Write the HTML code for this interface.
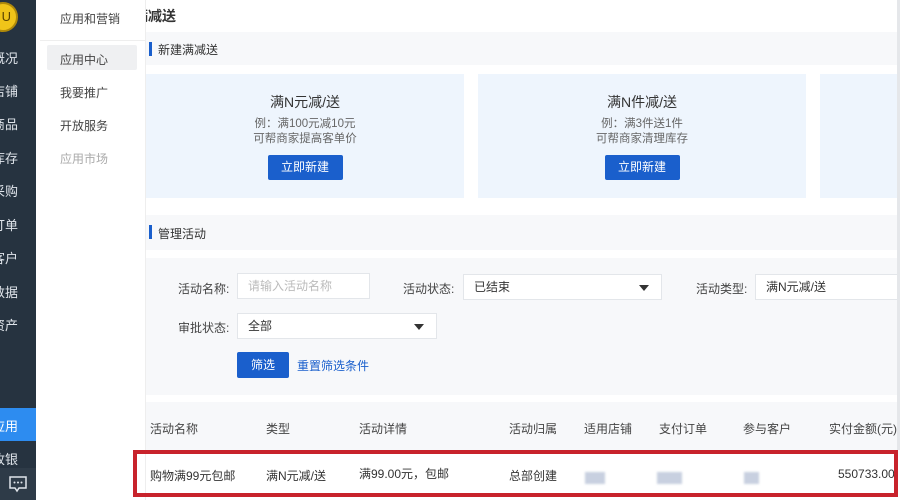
<!DOCTYPE html>
<html><head><meta charset="utf-8"><style>
*{margin:0;padding:0;box-sizing:border-box}
body{width:900px;height:500px;overflow:hidden;background:#fff;font-family:"Liberation Sans","Noto Sans CJK SC",sans-serif;font-size:12px;color:#333;position:relative}
.a{position:absolute}
#sb{left:0;top:0;width:36px;height:500px;background:#263340;overflow:hidden;z-index:3}
#sb .it{position:absolute;left:-12px;width:30px;color:#dfe4ea;font-size:13px;text-align:right;white-space:nowrap}
#sub{left:36px;top:0;width:110px;height:500px;background:#fff;border-right:1px solid #eee;z-index:2}
.sn{position:absolute;left:24px;font-size:12px;color:#444}
.gray{background:#f7f8fa}
.card{background:#eef5fd;text-align:center}
.card h3{font-weight:normal;font-size:14px;color:#333;margin-top:18px}
.card p{font-size:11.5px;color:#666;line-height:15px}
.btn{display:inline-block;background:#1a5fcc;color:#fff;font-size:12px;width:75px;height:25px;line-height:25px;border-radius:2px;text-align:center}
.inp{background:#fff;border:1px solid #e3e6ea;height:26px;line-height:24px;padding-left:10px;font-size:12px;white-space:nowrap}
.tri{position:absolute;right:12px;top:10px;width:0;height:0;border-left:5px solid transparent;border-right:5px solid transparent;border-top:6px solid #333}
.lbl{font-size:12px;color:#444;white-space:nowrap}
.bar{position:absolute;width:3px;height:14px;background:#1a5fcc}
.blur{background:#c8d0e0;filter:blur(1px)}
</style></head><body>
<div id="sb" class="a">
 <div class="a" style="left:-12px;top:2px;width:30px;height:30px;border-radius:50%;background:#f0c419;border:2px solid #b08a0a;color:#5a4300;font-size:13px;line-height:26px;text-align:right;padding-right:5px">U</div>
 <div class="it" style="top:48px">概况</div>
 <div class="it" style="top:81px">店铺</div>
 <div class="it" style="top:114px">商品</div>
 <div class="it" style="top:148px">库存</div>
 <div class="it" style="top:181px">采购</div>
 <div class="it" style="top:215px">订单</div>
 <div class="it" style="top:248px">客户</div>
 <div class="it" style="top:282px">数据</div>
 <div class="it" style="top:315px">资产</div>
 <div class="a" style="left:0;top:408px;width:36px;height:33px;background:#2d8cf0"></div>
 <div class="it" style="top:416px;color:#fff">应用</div>
 <div class="it" style="top:449px">收银</div>
 <div class="a" style="left:0;top:468px;width:36px;height:32px;background:#2e3b48"></div>
 <svg class="a" style="left:8px;top:474px" width="20" height="20" viewBox="0 0 20 20"><path d="M2 3h16v11H11l-2 3-2-3H2z" fill="none" stroke="#dfe4ea" stroke-width="1.5"/><circle cx="6.5" cy="8.5" r="1" fill="#dfe4ea"/><circle cx="10" cy="8.5" r="1" fill="#dfe4ea"/><circle cx="13.5" cy="8.5" r="1" fill="#dfe4ea"/></svg>
</div>
<div id="sub" class="a">
 <div class="sn" style="top:10px">应用和营销</div>
 <div class="a" style="left:4px;top:40px;width:106px;height:1px;background:#eee"></div>
 <div class="a" style="left:11px;top:45px;width:90px;height:25px;background:#eff0f2;border-radius:2px"></div>
 <div class="sn" style="top:51px">应用中心</div>
 <div class="sn" style="top:84px">我要推广</div>
 <div class="sn" style="top:117px">开放服务</div>
 <div class="sn" style="top:150px;color:#aaa">应用市场</div>
</div>
<div class="a" style="left:134px;top:6px;font-size:14px;font-weight:bold;color:#333;white-space:nowrap">满减送</div>
<div class="a gray" style="left:146px;top:32px;width:751px;height:33px"></div>
<div class="bar" style="left:149px;top:42px"></div>
<div class="a" style="left:158px;top:41px">新建满减送</div>
<div class="a card" style="left:146px;top:74px;width:318px;height:124px">
 <h3>满N元减/送</h3><p style="margin-top:5px">例：满100元减10元<br>可帮商家提高客单价</p>
 <div class="btn" style="margin-top:8px">立即新建</div></div>
<div class="a card" style="left:478px;top:74px;width:328px;height:124px">
 <h3>满N件减/送</h3><p style="margin-top:5px">例：满3件送1件<br>可帮商家清理库存</p>
 <div class="btn" style="margin-top:8px">立即新建</div></div>
<div class="a card" style="left:820px;top:74px;width:80px;height:124px"></div>
<div class="a gray" style="left:146px;top:215px;width:751px;height:35px"></div>
<div class="bar" style="left:149px;top:225px"></div>
<div class="a" style="left:158px;top:225px">管理活动</div>
<div class="a gray" style="left:146px;top:258px;width:751px;height:137px"></div>
<div class="a lbl" style="left:178px;top:280px">活动名称:</div>
<div class="a inp" style="left:237px;top:273px;width:133px;color:#bbb">请输入活动名称</div>
<div class="a lbl" style="left:403px;top:280px">活动状态:</div>
<div class="a inp" style="left:463px;top:274px;width:199px">已结束<span class="tri"></span></div>
<div class="a lbl" style="left:696px;top:280px">活动类型:</div>
<div class="a inp" style="left:755px;top:274px;width:145px">满N元减/送</div>
<div class="a lbl" style="left:178px;top:319px">审批状态:</div>
<div class="a inp" style="left:237px;top:313px;width:200px">全部<span class="tri"></span></div>
<div class="a btn" style="left:237px;top:352px;width:52px;height:26px;line-height:26px">筛选</div>
<div class="a" style="left:297px;top:357px;color:#1a5fcc">重置筛选条件</div>
<div class="a gray" style="left:146px;top:402px;width:751px;height:48px"></div>
<div class="a" style="left:150px;top:420px;color:#444">活动名称</div>
<div class="a" style="left:266px;top:420px;color:#444">类型</div>
<div class="a" style="left:359px;top:420px;color:#444">活动详情</div>
<div class="a" style="left:509px;top:420px;color:#444">活动归属</div>
<div class="a" style="left:584px;top:420px;color:#444">适用店铺</div>
<div class="a" style="left:659px;top:420px;color:#444">支付订单</div>
<div class="a" style="left:743px;top:420px;color:#444">参与客户</div>
<div class="a" style="left:829px;top:420px;color:#444;white-space:nowrap">实付金额(元)</div>
<div class="a" style="left:133px;top:450px;width:765px;height:47px;border:4px solid #c8232c;z-index:4"></div>
<div class="a" style="left:150px;top:467px">购物满99元包邮</div>
<div class="a" style="left:266px;top:467px">满N元减/送</div>
<div class="a" style="left:359px;top:465px">满99.00元，包邮</div>
<div class="a" style="left:509px;top:467px">总部创建</div>
<div class="a blur" style="left:585px;top:472px;width:20px;height:12px"></div>
<div class="a blur" style="left:657px;top:472px;width:25px;height:12px"></div>
<div class="a blur" style="left:744px;top:472px;width:15px;height:12px"></div>
<div class="a" style="left:838px;top:467px;white-space:nowrap;width:58px;overflow:hidden">550733.00</div>
<div class="a" style="left:897px;top:0;width:3px;height:450px;background:#e5e7ea"></div>
</body></html>
